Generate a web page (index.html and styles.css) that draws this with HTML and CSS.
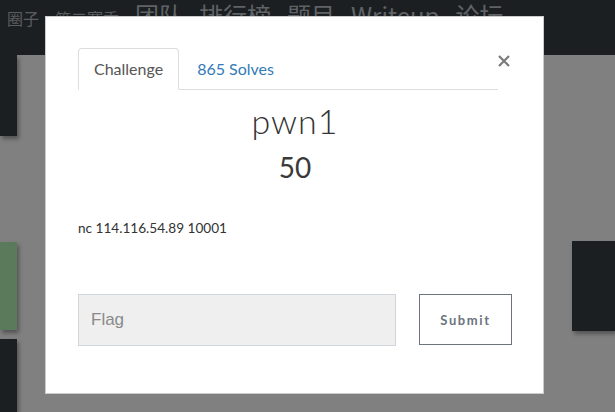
FILE: index.html
```html
<!DOCTYPE html>
<html lang="zh">
<head>
<meta charset="utf-8">
<title>pwn1</title>
<link rel="stylesheet" href="styles.css">
</head>
<body>
<nav class="navbar">
  <span class="nav-item small">圈子</span>
  <span class="nav-item small">第二赛季</span>
  <span class="nav-item">团队</span>
  <span class="nav-item">排行榜</span>
  <span class="nav-item">题目</span>
  <span class="nav-item">Writeup</span>
  <span class="nav-item">论坛</span>
</nav>
<main class="board">
  <div class="col col-left">
    <div class="card card-a"></div>
    <div class="card card-green"></div>
    <div class="card card-c"></div>
  </div>
  <div class="col col-right">
    <div class="card card-d"></div>
  </div>
</main>

<div class="modal">
  <div class="modal-head">
    <ul class="tabs">
      <li class="tab active">Challenge</li>
      <li class="tab link">865 Solves</li>
    </ul>
    <button class="close" aria-label="Close">
      <svg width="12" height="12" viewBox="0 0 12 12"><path d="M1 1L11 11M11 1L1 11" stroke="#7a7a7a" stroke-width="2.2" fill="none"/></svg>
    </button>
  </div>
  <h2 class="chal-name">pwn1</h2>
  <h3 class="chal-value">50</h3>
  <p class="chal-desc">nc 114.116.54.89 10001</p>
  <form class="flag-row">
    <input class="flag-input" type="text" placeholder="Flag">
    <button class="submit" type="button">Submit</button>
  </form>
</div>
</body>
</html>
```

FILE: styles.css
```css
html, body {
  margin: 0;
  padding: 0;
  height: 100%;
  overflow: hidden;
}
body {
  background: #808080;
  font-family: Lato, "Liberation Sans", sans-serif;
}
.navbar {
  height: 55px;
  background: #1c1f22;
  display: flex;
  align-items: baseline;
  gap: 16px;
  padding: 0 0 0 7px;
  box-sizing: border-box;
  font-family: "Noto Sans CJK SC", "Liberation Sans", sans-serif;
  color: #606366;
  position: relative;
  z-index: 1;
}
.nav-item {
  font-size: 24px;
  line-height: 29px;
}
.nav-item.small {
  font-size: 16px;
  color: #5a5d60;
}
.board {
  display: flex;
  justify-content: space-between;
}
.col {
  display: flex;
  flex-direction: column;
}
.col-left { width: 17px; }
.col-right { width: 43px; }
.card {
  background: #1c1f22;
  box-shadow: 2px 3px 4px rgba(0,0,0,0.35);
}
.card-a { height: 81px; }
.card-green { background: #5a7a5b; height: 88px; margin-top: 106px; }
.card-c { height: 90px; margin-top: 9px; }
.card-d { height: 90px; margin-top: 186px; }

.modal {
  position: absolute;
  z-index: 10;
  left: 45px;
  top: 16px;
  width: 499px;
  height: 378px;
  box-sizing: border-box;
  background: #fff;
  border: 1px solid rgba(0,0,0,0.2);
  padding: 31px 31px 0 32px;
}
.modal-head {
  display: flex;
  align-items: flex-start;
  padding-right: 1px;
}
.tabs {
  flex: 1;
  display: flex;
  list-style: none;
  margin: 0;
  padding: 0;
  border-bottom: 1px solid #ddd;
}
.tab {
  font-size: 16px;
  line-height: 20px;
  padding: 10px 15px;
  border: 1px solid transparent;
  border-radius: 4px 4px 0 0;
  margin: 0 2px -1px 0;
  color: #555;
}
.tab.active {
  border-color: #ddd;
  border-bottom-color: #fff;
  background: #fff;
}
.tab.link { color: #337ab7; }
.close {
  width: 13px;
  height: 12px;
  padding: 0;
  margin: 7px 0 0 0;
  border: 0;
  background: none;
  display: flex;
}
.chal-name {
  margin: 12px 0 0;
  text-align: center;
  font-size: 34px;
  font-weight: 300;
  letter-spacing: 1px;
  line-height: 38px;
  color: #333;
}
.chal-value {
  margin: 11px 0 0;
  text-align: center;
  font-size: 28px;
  font-weight: 400;
  line-height: 32px;
  color: #3a3a3a;
}
.chal-desc {
  margin: 36px 0 0;
  font-size: 13.6px;
  line-height: 18px;
  color: #333;
}
.flag-row {
  display: flex;
  gap: 23px;
  margin-top: 57px;
}
.flag-input {
  flex: 1;
  min-width: 0;
  height: 52px;
  box-sizing: border-box;
  background: #efefef;
  border: 1px solid #d0d5da;
  padding: 0 12px;
  font-family: "Liberation Sans", Arial, sans-serif;
  font-size: 17px;
  color: #555;
  outline: none;
}
.flag-input::placeholder { color: #8a8a8a; }
.submit {
  width: 93px;
  flex: none;
  height: 51px;
  box-sizing: border-box;
  background: #fff;
  border: 1px solid #6c757d;
  color: #6c757d;
  font-family: Lato, "Liberation Sans", sans-serif;
  font-weight: 700;
  font-size: 13px;
  letter-spacing: 1.6px;
  padding: 0;
}
```
